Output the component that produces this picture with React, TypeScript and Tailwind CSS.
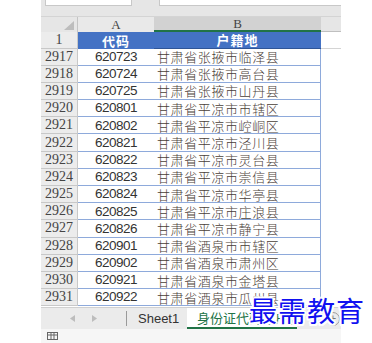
import React from "react";

const rows: [string, string, string][] = [
  ["2917", "620723", "甘肃省张掖市临泽县"],
  ["2918", "620724", "甘肃省张掖市高台县"],
  ["2919", "620725", "甘肃省张掖市山丹县"],
  ["2920", "620801", "甘肃省平凉市市辖区"],
  ["2921", "620802", "甘肃省平凉市崆峒区"],
  ["2922", "620821", "甘肃省平凉市泾川县"],
  ["2923", "620822", "甘肃省平凉市灵台县"],
  ["2924", "620823", "甘肃省平凉市崇信县"],
  ["2925", "620824", "甘肃省平凉市华亭县"],
  ["2926", "620825", "甘肃省平凉市庄浪县"],
  ["2927", "620826", "甘肃省平凉市静宁县"],
  ["2928", "620901", "甘肃省酒泉市市辖区"],
  ["2929", "620902", "甘肃省酒泉市肃州区"],
  ["2930", "620921", "甘肃省酒泉市金塔县"],
  ["2931", "620922", "甘肃省酒泉市瓜州县"],
];

const serif = "font-['Liberation_Serif',serif]";
const cjk = "font-['Noto_Sans_CJK_SC',sans-serif]";

export default function App() {
  return (
    <div className="relative h-[343px] w-[372px] overflow-hidden bg-white">
      <div className="ml-[41px] flex w-[300px] flex-col">
        {/* formula bar remnant */}
        <div className="relative h-[16px] bg-[#e6e6e6]">
          <div className="absolute left-[4px] top-0 h-[6px] w-[87px] border-x border-b border-[#c8c8c8] bg-white" />
          <div className="absolute left-[118px] top-0 h-[6px] w-[182px] border-b border-l border-[#c8c8c8] bg-white" />
        </div>

        {/* column headers */}
        <div className={`flex h-[16px] border-t border-[#d4d4d4] text-[13px] leading-none text-[#444] ${serif}`}>
          <div className="relative w-[37px] border-r border-[#c4c4c4] bg-[#e6e6e6]">
            <svg className="absolute bottom-[2px] right-[3px]" width="10" height="9" viewBox="0 0 10 9">
              <path d="M10 0 L10 9 L0 9 Z" fill="#bdbdbd" />
            </svg>
          </div>
          <div className="flex w-[76px] items-center justify-center bg-[#e9e9e9]">A</div>
          <div className="flex w-[167px] items-center justify-center border-b-2 border-[#217346] bg-[#d2d2d2]">B</div>
          <div className="w-[20px] border-b border-[#bfbfbf] bg-[#e6e6e6]" />
        </div>

        {/* grid body */}
        <div className="h-[275px] overflow-hidden">
          <div className="flex h-[16.5px]">
            <div className={`flex w-[37px] items-center justify-center border-b border-r border-[#c8c8c8] bg-[#ececec] text-[14px] leading-none text-[#444] ${serif}`}>
              1
            </div>
            <div className={`flex w-[76px] items-center justify-center bg-[#4472c4] text-[13px] font-bold leading-none tracking-[1px] text-white ${cjk}`}>
              代码
            </div>
            <div className={`flex w-[167px] items-center justify-center border-b border-[#2f5597] bg-[#4472c4] text-[13px] font-bold leading-none tracking-[1px] text-white ${cjk}`}>
              户籍地
            </div>
            <div className="w-[20px] border-b border-[#d4d4d4]" />
          </div>
          {rows.map(([n, code, place]) => (
            <div key={n} className="flex h-[17.2px]">
              <div className={`flex w-[37px] items-center justify-center border-b border-r border-[#c8c8c8] bg-[#ececec] text-[14px] leading-none text-[#444] ${serif}`}>
                {n}
              </div>
              <div className="flex w-[76px] items-center justify-center border-b border-[#8eaadb] font-['Liberation_Sans',sans-serif] text-[13.5px] leading-none tracking-[-0.5px] text-[#333]">
                {code}
              </div>
              <div className={`flex w-[167px] items-center border-b border-r border-[#8eaadb] pl-[3px] text-[13px] font-light leading-none tracking-[0.6px] text-[#4a4038] ${cjk}`}>
                {place}
              </div>
              <div className="w-[20px]" />
            </div>
          ))}
        </div>

        {/* sheet tabs */}
        <div className="flex h-[22px] items-stretch border-t border-[#d0d0d0] bg-[#ebebeb] font-['Liberation_Sans',sans-serif] text-[13px]">
          <div className="my-[3px] flex w-[86px] items-center justify-center gap-[17px] border-r border-[#9a9a9a]">
            <svg width="5" height="7" viewBox="0 0 5 7">
              <path d="M5 0 L0 3.5 L5 7 Z" fill="#bdbdbd" />
            </svg>
            <svg width="5" height="7" viewBox="0 0 5 7">
              <path d="M0 0 L5 3.5 L0 7 Z" fill="#bdbdbd" />
            </svg>
          </div>
          <div className="flex w-[60px] items-center pl-[11px] text-[#333]">Sheet1</div>
          <div className={`flex w-[110px] items-center overflow-hidden whitespace-nowrap border-b-2 border-[#217346] bg-white pl-[10px] text-[13px] text-[#217346] ${cjk}`}>
            身份证代码与户籍对照
          </div>
          <div className="flex flex-1 items-center justify-end pr-[1px]">
            <div className="flex h-[14px] w-[14px] items-center justify-center rounded-full border border-[#9a9a9a] text-[11px] leading-none text-[#777]">
              +
            </div>
          </div>
        </div>

        {/* status bar */}
        <div className="flex h-[14px] items-center bg-[#f6f6f6] pl-[6px]">
          <svg width="11" height="8" viewBox="0 0 11 8">
            <rect x="0.5" y="0.5" width="10" height="7" fill="none" stroke="#666" />
            <path d="M0.5 3 H10.5 M4 0.5 V7.5 M7 0.5 V7.5" stroke="#666" />
          </svg>
        </div>
      </div>

      {/* watermark */}
      <div
        className={`absolute left-[249px] top-[296px] text-[28px] leading-none tracking-[1px] text-[#1010f0] ${cjk} [text-shadow:1.5px_1.5px_0_#fff,-1.5px_-1.5px_0_#fff,1.5px_-1.5px_0_#fff,-1.5px_1.5px_0_#fff,0_2px_0_#fff,0_-2px_0_#fff,2px_0_0_#fff,-2px_0_0_#fff]`}
      >
        最需教育
      </div>
    </div>
  );
}
